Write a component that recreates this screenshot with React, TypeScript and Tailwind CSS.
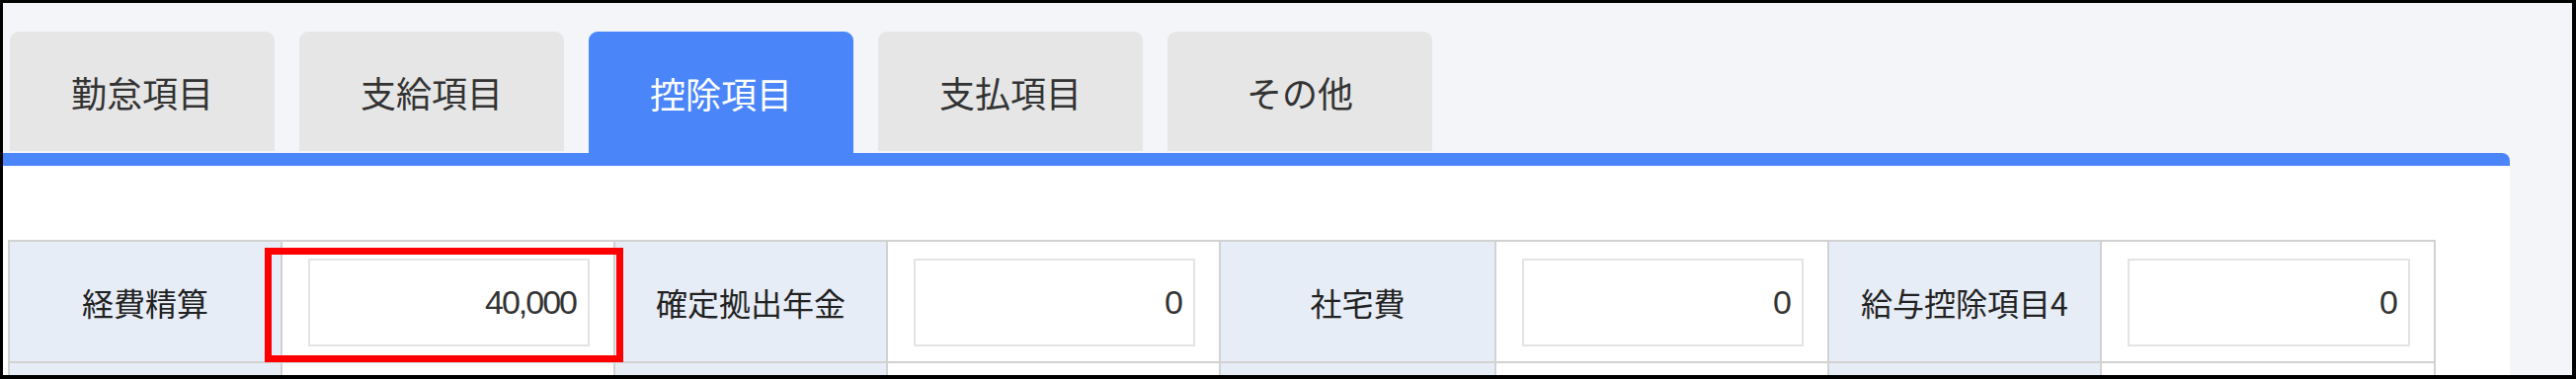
import React from 'react';

const tabs = ['勤怠項目', '支給項目', '控除項目', '支払項目', 'その他'];
const activeTab = 2;

const fields = [
    { label: '経費精算', value: '40,000', highlight: true },
    { label: '確定拠出年金', value: '0' },
    { label: '社宅費', value: '0' },
    { label: '給与控除項目4', value: '0' },
];

const font = { fontFamily: '"Noto Sans CJK JP", "Liberation Sans", sans-serif' };

function Tab({ label, active }: { label: string; active: boolean }) {
    return (
        <div
            className={`w-[268px] rounded-t-[9px] flex items-center justify-center text-[36px] ${
                active ? 'h-[123px] bg-[#4a86fa] text-white' : 'h-[121px] mb-[2px] bg-[#e6e6e6] text-[#333]'
            }`}
        >
            {label}
        </div>
    );
}

function LabelCell({ label }: { label: string }) {
    return (
        <div className="bg-[#e7edf6] flex items-center justify-center text-[32px] text-[#222] h-[121px]">
            {label}
        </div>
    );
}

function InputCell({ value, highlight }: { value: string; highlight?: boolean }) {
    return (
        <div className="relative bg-white h-[121px] pl-[26px] pr-[24px] pt-[17px]">
            <div
                className="h-[89px] border-2 border-[#e4e4e4] bg-white flex items-center justify-end pr-[12px] text-[34px] tracking-[-2px] text-[#333]"
                style={{ fontFamily: '"Liberation Sans", "Noto Sans CJK JP", sans-serif' }}
            >
                {value}
            </div>
            {highlight && (
                <div className="absolute z-10 left-[-18px] right-[-10px] top-[6px] bottom-[-1px] border-[7px] border-[#ff0000]" />
            )}
        </div>
    );
}

export default function App() {
    return (
        <div
            className="w-[2608px] h-[384px] overflow-hidden border-t-[3px] border-l-[3px] border-r-4 border-b-4 border-black bg-[#f4f5f9]"
            style={font}
        >
            <div className="pt-[29px] pl-[7px] flex items-end gap-[25px]">
                {tabs.map((t, i) => (
                    <Tab key={t} label={t} active={i === activeTab} />
                ))}
            </div>

            <div className="mr-[63px]">
                <div className="h-[13px] bg-[#4a86fa] rounded-tr-[8px]" />
                <div className="bg-white h-[300px] pt-[75px] pl-[5px]">
                    <div className="w-[2458px] bg-[#d2d2d2] p-[2px] grid grid-cols-[274px_335px_274px_335px_277px_335px_274px_336px] gap-[2px]">
                        {fields.map((f) => (
                            <React.Fragment key={f.label}>
                                <LabelCell label={f.label} />
                                <InputCell value={f.value} highlight={f.highlight} />
                            </React.Fragment>
                        ))}
                        {fields.map((f) => (
                            <React.Fragment key={f.label + '2'}>
                                <LabelCell label="" />
                                <InputCell value="" />
                            </React.Fragment>
                        ))}
                    </div>
                </div>
            </div>
        </div>
    );
}
